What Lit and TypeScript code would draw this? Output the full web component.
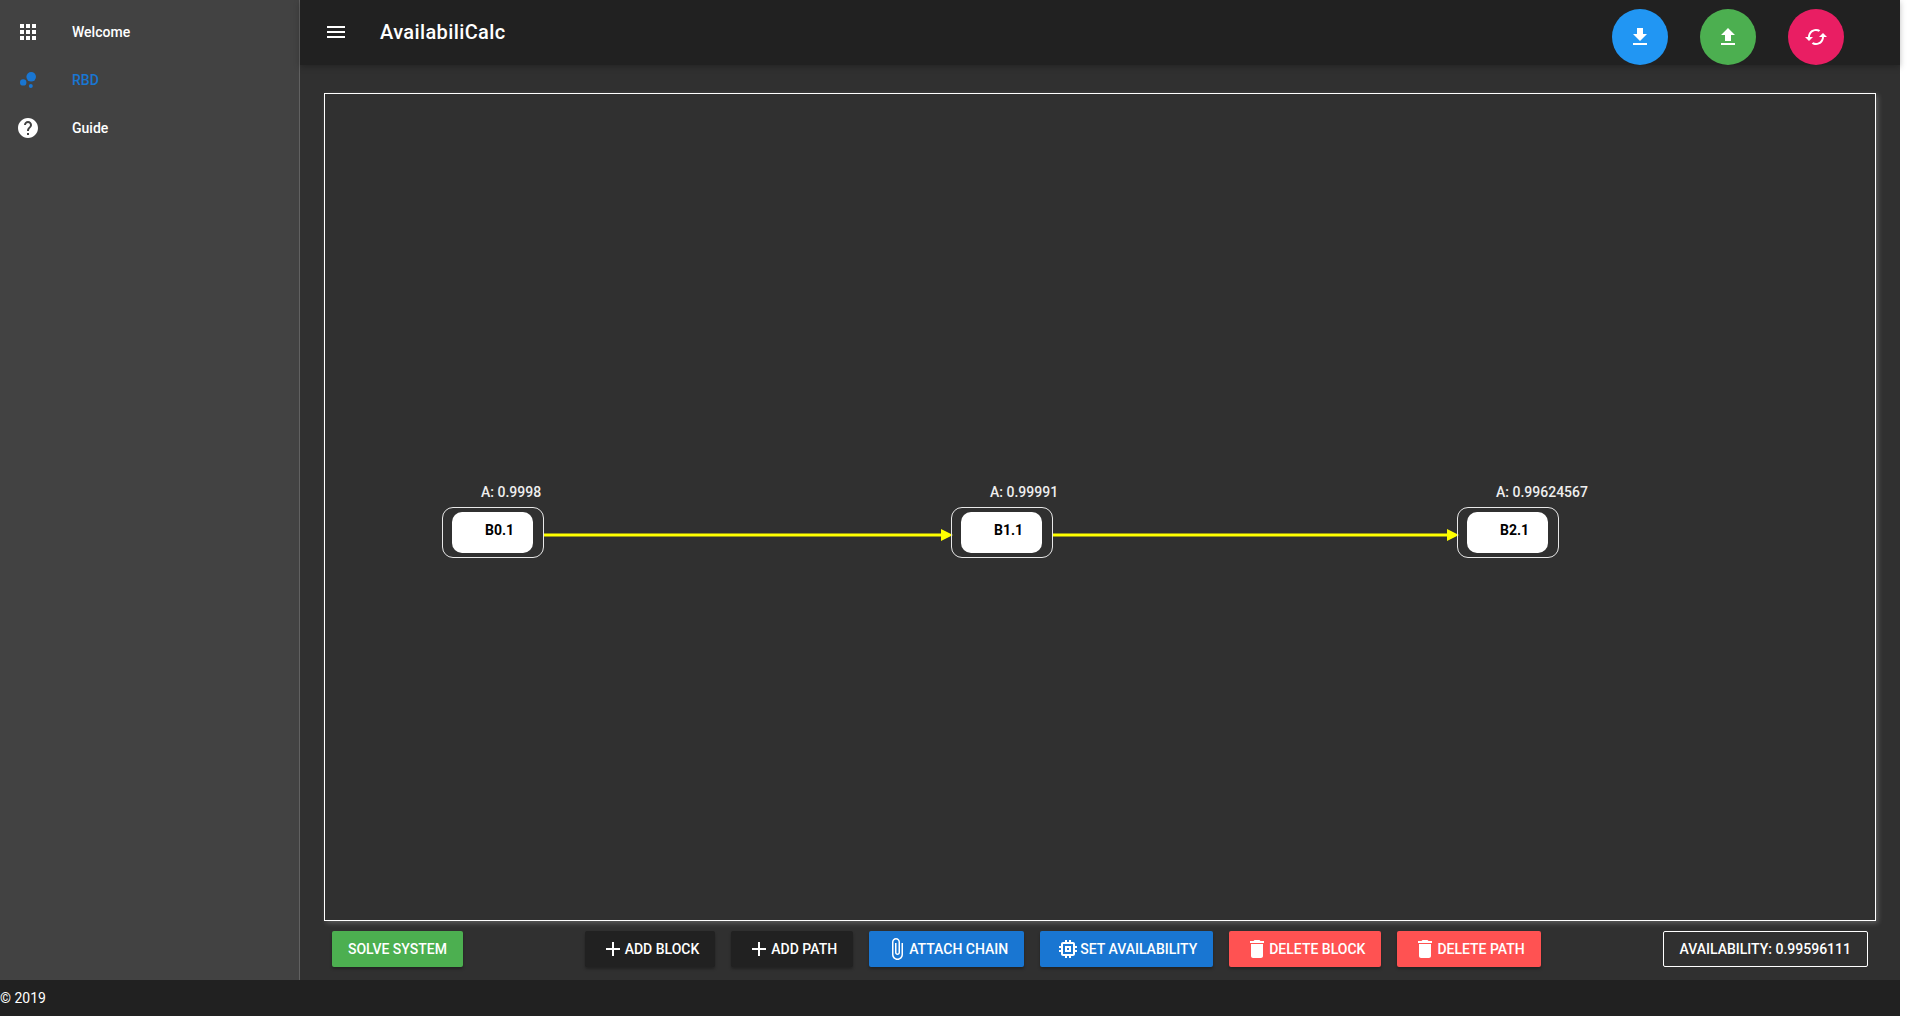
import { LitElement, html, css, svg } from "lit";
import { customElement } from "lit/decorators.js";

const icons: Record<string, string> = {
  apps: "M4 8h4V4H4v4zm6 12h4v-4h-4v4zm-6 0h4v-4H4v4zm0-6h4v-4H4v4zm6 0h4v-4h-4v4zm6-10v4h4V4h-4zm-6 4h4V4h-4v4zm6 6h4v-4h-4v4zm0 6h4v-4h-4v4z",
  help: "M12 2C6.48 2 2 6.48 2 12s4.48 10 10 10 10-4.48 10-10S17.52 2 12 2zm1 17h-2v-2h2v2zm2.07-7.75l-.9.92C13.45 12.9 13 13.5 13 15h-2v-.5c0-1.1.45-2.1 1.17-2.83l1.24-1.26c.37-.36.59-.86.59-1.41 0-1.1-.9-2-2-2s-2 .9-2 2H8c0-2.21 1.79-4 4-4s4 1.79 4 4c0 .88-.36 1.68-.93 2.25z",
  menu: "M3 18h18v-2H3v2zm0-5h18v-2H3v2zm0-7v2h18V6H3z",
  download: "M19 9h-4V3H9v6H5l7 7 7-7zM5 18v2h14v-2H5z",
  upload: "M9 16h6v-6h4l-7-7-7 7h4zm-4 2h14v2H5z",
  cached: "M19 8l-4 4h3c0 3.31-2.69 6-6 6-1.01 0-1.97-.25-2.8-.7l-1.46 1.46C8.97 19.54 10.43 20 12 20c4.42 0 8-3.58 8-8h3l-4-4zM6 12c0-3.31 2.69-6 6-6 1.01 0 1.97.25 2.8.7l1.46-1.46C15.03 4.46 13.57 4 12 4c-4.42 0-8 3.58-8 8H1l4 4 4-4H6z",
  add: "M19 13h-6v6h-2v-6H5v-2h6V5h2v6h6v2z",
  attach: "M16.5 6v11.5c0 2.21-1.79 4-4 4s-4-1.79-4-4V5c0-1.38 1.12-2.5 2.5-2.5s2.5 1.12 2.5 2.5v10.5c0 .55-.45 1-1 1s-1-.45-1-1V6H10v9.5c0 1.38 1.12 2.5 2.5 2.5s2.5-1.12 2.5-2.5V5c0-2.21-1.79-4-4-4S7 2.79 7 5v12.5c0 3.04 2.46 5.5 5.5 5.5s5.5-2.46 5.5-5.5V6h-1.5z",
  memory: "M15 9H9v6h6V9zm-2 4h-2v-2h2v2zm8-2V9h-2V7c0-1.1-.9-2-2-2h-2V3h-2v2h-2V3H9v2H7c-1.1 0-2 .9-2 2v2H3v2h2v2H3v2h2v2c0 1.1.9 2 2 2h2v2h2v-2h2v2h2v-2h2c1.1 0 2-.9 2-2v-2h2v-2h-2v-2h2zm-4 6H7V7h10v10z",
  del: "M6 19c0 1.1.9 2 2 2h8c1.1 0 2-.9 2-2V7H6v12zM19 4h-3.5l-1-1h-5l-1 1H5v2h14V4z",
};

const icon = (n: string) =>
  html`<svg class="icon" viewBox="0 0 24 24" fill="currentColor"><path d=${icons[n]}></path></svg>`;

const nodes = [
  { x: 117, name: "B0.1", label: "A: 0.9998", lx: 38 },
  { x: 626, name: "B1.1", label: "A: 0.99991", lx: 38 },
  { x: 1132, name: "B2.1", label: "A: 0.99624567", lx: 38 },
];

const links = [
  { x1: 218, x2: 626 },
  { x1: 727, x2: 1132 },
];

@customElement("app-root")
export class AppRoot extends LitElement {
  static styles = css`
    :host {
      display: block;
      width: 1900px;
      height: 1016px;
      font-family: Roboto, "Liberation Sans", sans-serif;
      color: #fff;
      font-size: 14px;
    }
    * { box-sizing: border-box; }
    .shell { display: grid; grid-template-columns: 300px 1fr; grid-template-rows: 65px 915px 36px; height: 100%; background: #303030; }
    .side { grid-row: 1 / 3; background: #424242; border-right: 1px solid #616161; padding-top: 8px; }
    .item { display: flex; align-items: center; height: 48px; padding-left: 16px; font-weight: 500; }
    .item .icon { margin-right: 32px; }
    .item.active { color: #1976d2; }
    .icon { width: 24px; height: 24px; flex: none; display: block; }
    .head { background: #212121; display: flex; align-items: flex-start; padding: 9px 56px 0 24px; box-shadow: 0 2px 6px rgba(0,0,0,.25); position: relative; z-index: 1; }
    .head .menu { margin-top: 11px; }
    .title { font-size: 20px; font-weight: 500; line-height: 46px; margin-left: 32px; flex: 1; letter-spacing: .38px; }
    .fabs { display: flex; gap: 32px; }
    .fab { width: 56px; height: 56px; border-radius: 50%; display: flex; align-items: center; justify-content: center; }
    .blue { background: #2196f3; }
    .green { background: #4caf50; }
    .pink { background: #e91e63; }
    .main { display: flex; flex-direction: column; padding: 28px 24px 0; }
    .canvas { position: relative; height: 828px; border: 1px solid #fff; box-shadow: 2px 2px 5px rgba(255,255,255,.22); flex: none; }
    .wires { position: absolute; left: 0; top: 0; width: 100%; height: 100%; }
    .node { position: absolute; top: 413px; width: 102px; height: 51px; border: 1px solid #e8e8e8; border-radius: 11px; padding: 4px 9px; }
    .inner { height: 41px; width: 81px; background: #fff; border-radius: 10px; color: #000; font-weight: 700; padding-left: 33px; line-height: 36px; white-space: nowrap; }
    .label { position: absolute; top: -26px; font-weight: 500; white-space: nowrap; color: #eee; line-height: 20px; }
    .bar { display: flex; justify-content: space-between; padding: 10px 8px 0; }
    .group { display: flex; gap: 16px; }
    .btn { height: 36px; display: flex; align-items: center; padding: 0 16px; border-radius: 2px; font-weight: 500; text-transform: uppercase; white-space: nowrap; box-shadow: 0 2px 3px rgba(0,0,0,.3); }
    .dark { background: #212121; }
    .primary { background: #1976d2; }
    .danger { background: #ff5252; }
    .outline { border: 1px solid #fff; border-radius: 2px; box-shadow: none; }
    .foot { grid-column: 1 / 3; background: #212121; line-height: 36px; }
  `;

  render() {
    return html`<div class="shell">
      <nav class="side">
        <div class="item">${icon("apps")}Welcome</div>
        <div class="item active">
          <svg class="icon" viewBox="0 0 24 24" fill="currentColor"><circle cx="7.2" cy="14.4" r="3.2"></circle><circle cx="14.8" cy="18" r="2"></circle><circle cx="15.2" cy="8.8" r="4.8"></circle></svg>
          RBD
        </div>
        <div class="item">${icon("help")}Guide</div>
      </nav>
      <header class="head">
        <span class="menu">${icon("menu")}</span>
        <div class="title">AvailabiliCalc</div>
        <div class="fabs">
          <div class="fab blue">${icon("download")}</div>
          <div class="fab green">${icon("upload")}</div>
          <div class="fab pink">${icon("cached")}</div>
        </div>
      </header>
      <main class="main">
        <div class="canvas">
          <svg class="wires">
            ${links.map(
              (l) => svg`<line x1=${l.x1} y1="441" x2=${l.x2 - 8} y2="441" stroke="#ffff00" stroke-width="3"></line>
                <polygon points="${l.x2 - 10},435 ${l.x2 + 2},441 ${l.x2 - 10},447" fill="#ffff00"></polygon>`
            )}
          </svg>
          ${nodes.map(
            (n) => html`<div class="node" style="left:${n.x}px">
              <span class="label" style="left:${n.lx}px">${n.label}</span>
              <div class="inner">${n.name}</div>
            </div>`
          )}
        </div>
        <div class="bar">
          <div class="btn green">Solve System</div>
          <div class="group">
            <div class="btn dark">${icon("add")}Add Block</div>
            <div class="btn dark">${icon("add")}Add Path</div>
            <div class="btn primary">${icon("attach")}Attach Chain</div>
            <div class="btn primary">${icon("memory")}Set Availability</div>
            <div class="btn danger">${icon("del")}Delete Block</div>
            <div class="btn danger">${icon("del")}Delete Path</div>
          </div>
          <div class="btn outline">Availability: 0.99596111</div>
        </div>
      </main>
      <footer class="foot">© 2019</footer>
    </div>`;
  }
}
